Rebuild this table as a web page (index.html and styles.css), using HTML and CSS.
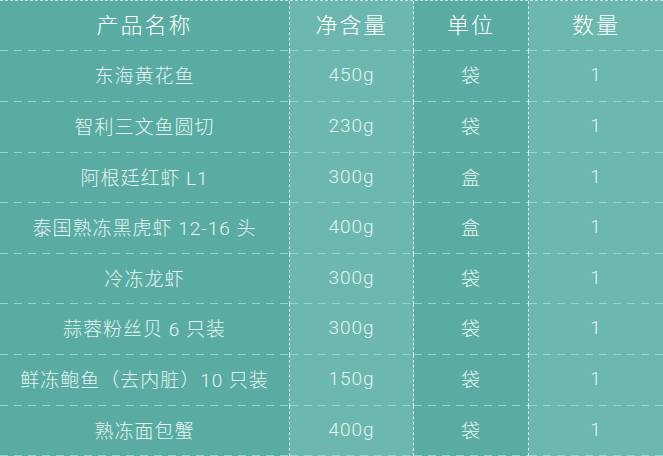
FILE: index.html
```html
<!DOCTYPE html>
<html lang="zh-CN">
<head>
<meta charset="utf-8">
<link rel="stylesheet" href="styles.css">
</head>
<body>
<div class="grid">
  <div class="cell head dark">产品名称</div>
  <div class="cell head light">净含量</div>
  <div class="cell head dark">单位</div>
  <div class="cell head light last">数量</div>

  <div class="cell dark">东海黄花鱼</div>
  <div class="cell light">450g</div>
  <div class="cell dark">袋</div>
  <div class="cell light last">1</div>

  <div class="cell dark">智利三文鱼圆切</div>
  <div class="cell light">230g</div>
  <div class="cell dark">袋</div>
  <div class="cell light last">1</div>

  <div class="cell dark">阿根廷红虾 L1</div>
  <div class="cell light">300g</div>
  <div class="cell dark">盒</div>
  <div class="cell light last">1</div>

  <div class="cell dark">泰国熟冻黑虎虾 12-16 头</div>
  <div class="cell light">400g</div>
  <div class="cell dark">盒</div>
  <div class="cell light last">1</div>

  <div class="cell dark">冷冻龙虾</div>
  <div class="cell light">300g</div>
  <div class="cell dark">袋</div>
  <div class="cell light last">1</div>

  <div class="cell dark">蒜蓉粉丝贝 6 只装</div>
  <div class="cell light">300g</div>
  <div class="cell dark">袋</div>
  <div class="cell light last">1</div>

  <div class="cell dark">鲜冻鲍鱼（去内脏）10 只装</div>
  <div class="cell light">150g</div>
  <div class="cell dark">袋</div>
  <div class="cell light last">1</div>

  <div class="cell dark">熟冻面包蟹</div>
  <div class="cell light">400g</div>
  <div class="cell dark">袋</div>
  <div class="cell light last">1</div>
</div>
</body>
</html>
```

FILE: styles.css
```css
html, body {
  margin: 0;
  padding: 0;
  background: #5eb0a6;
}
body {
  width: 663px;
  height: 456px;
  overflow: hidden;
}
.grid {
  display: grid;
  grid-template-columns: 290px 124px 115px 134px;
  grid-template-rows: 50px 51px 51px 50px 51px 50px 51px 51px 50px;
  border-top: 1px dashed rgba(225, 245, 241, 0.75);
  font-family: Roboto, "Noto Sans CJK SC", sans-serif;
  font-size: 19px;
  font-weight: 300;
  letter-spacing: 1px;
  color: #e4f4f1;
}
.cell {
  box-sizing: border-box;
  display: flex;
  align-items: center;
  justify-content: center;
  border-right: 1px dashed rgba(236, 249, 246, 0.85);
  background-repeat: repeat-x;
  background-position: 0 100%;
  background-size: 14px 1px;
  background-image: linear-gradient(to right, #93d6cd 0, #93d6cd 8px, transparent 8px, transparent 14px);
  padding-bottom: 4px;
  white-space: nowrap;
}
.cell.last { border-right: none; }
.dark { background-color: #5aaca2; }
.light { background-color: #6db8ae; }
.head {
  color: #ffffff;
  font-size: 22px;
  letter-spacing: 2px;
  padding-bottom: 6px;
}
```
